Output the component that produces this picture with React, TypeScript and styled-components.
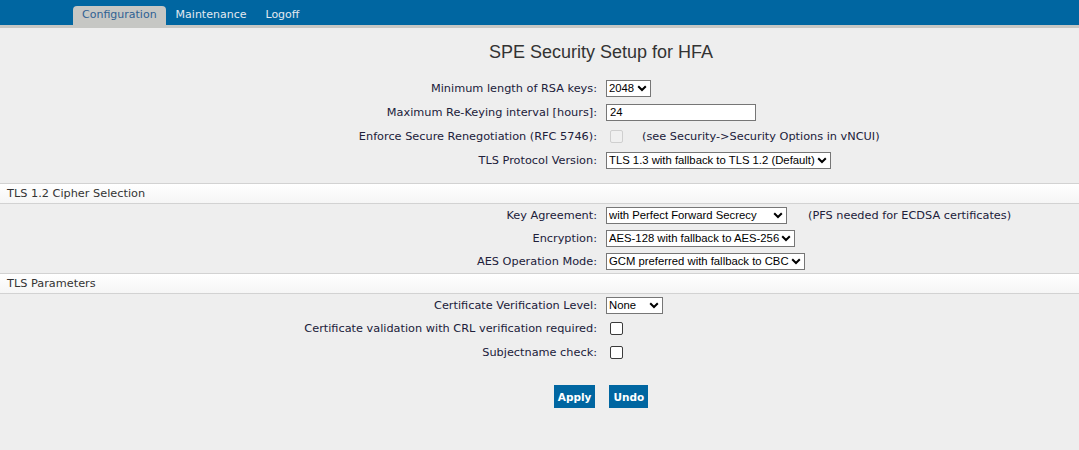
import React from "react";
import styled, { createGlobalStyle } from "styled-components";

const GlobalStyle = createGlobalStyle`
  html, body { margin: 0; padding: 0; background: #eeeeee; }
  body { font-family: "DejaVu Sans", Verdana, sans-serif; font-size: 11.3px; color: #20203a; }
`;

const Header = styled.div`
  height: 25px;
  background: #0066a1;
  display: flex;
  align-items: flex-end;
  padding-left: 73px;
  gap: 1px;
`;

const Tab = styled.a<{ $active?: boolean }>`
  height: 19px;
  line-height: 18px;
  padding: 0 9px;
  font-family: "DejaVu Sans", Verdana, sans-serif;
  font-size: 11px;
  text-decoration: none;
  border-radius: 4px 4px 0 0;
  background: ${(p) => (p.$active ? "#c6c7c4" : "transparent")};
  color: ${(p) => (p.$active ? "#2f6193" : "#e3e9f0")};
  cursor: pointer;
`;

const Strip = styled.div`
  height: 3px;
  background: #c6c7c4;
`;

const Title = styled.h1`
  margin: 13px 0 13px;
  padding-left: 123px;
  text-align: center;
  font-family: "Liberation Sans", Arial, sans-serif;
  font-weight: normal;
  font-size: 18px;
  line-height: 22px;
  color: #333333;
`;

const Row = styled.div<{ $h: number }>`
  display: grid;
  grid-template-columns: 601px 1fr;
  align-items: center;
  height: ${(p) => p.$h}px;
`;

const Label = styled.div`
  text-align: right;
  padding-right: 4px;
  white-space: nowrap;
`;

const Field = styled.div<{ $gap?: number }>`
  display: flex;
  align-items: center;
  padding-left: 5px;
  gap: ${(p) => p.$gap ?? 0}px;
  white-space: nowrap;
`;

const SectionHeader = styled.div<{ $mt: number }>`
  margin-top: ${(p) => p.$mt}px;
  height: 19px;
  line-height: 19px;
  border-top: 1px solid #d2d2d2;
  border-bottom: 1px solid #d2d2d2;
  background: linear-gradient(#ffffff, #f5f5f5);
  padding-left: 7px;
  color: #333333;
`;

const SelectWrap = styled.span<{ $w: number }>`
  position: relative;
  display: inline-block;
  width: ${(p) => p.$w}px;
  height: 17px;
`;

const Select = styled.select`
  appearance: none;
  -webkit-appearance: none;
  box-sizing: border-box;
  width: 100%;
  height: 100%;
  margin: 0;
  padding: 0 14px 0 2px;
  border: 1px solid #767676;
  border-radius: 0;
  background: #ffffff;
  color: #000000;
  font-family: "Liberation Sans", Arial, sans-serif;
  font-size: 11.3px;
  line-height: 15px;
  outline: none;
`;

const Chevron = styled.svg`
  position: absolute;
  right: 4px;
  top: 5px;
  width: 10px;
  height: 7px;
  pointer-events: none;
`;

const TextInput = styled.input`
  box-sizing: border-box;
  width: 150px;
  height: 17px;
  margin: 0;
  padding: 0 3px;
  border: 1px solid #767676;
  background: #ffffff;
  color: #000;
  font-family: "Liberation Sans", Arial, sans-serif;
  font-size: 11.3px;
  outline: none;
`;

const Check = styled.input`
  appearance: none;
  -webkit-appearance: none;
  box-sizing: border-box;
  width: 13px;
  height: 13px;
  margin: 0 0 0 4px;
  border: 1px solid #3b3b3b;
  border-radius: 2px;
  background: #ffffff;
  &:disabled {
    border-color: #cfcfcf;
    background: #f0f0f0;
  }
`;

const Note = styled.span`
  color: #20203a;
`;

const Buttons = styled.div`
  margin-top: 20px;
  padding-left: 123px;
  display: flex;
  justify-content: center;
  gap: 14px;
`;

const Button = styled.button`
  height: 23px;
  padding: 0 4px;
  border: none;
  background: #0066a1;
  color: #ffffff;
  font-family: "DejaVu Sans", Verdana, sans-serif;
  font-weight: bold;
  font-size: 10.5px;
  cursor: pointer;
`;

function Dropdown({ w, value, options }: { w: number; value: string; options?: string[] }) {
  const opts = options ?? [value];
  return (
    <SelectWrap $w={w}>
      <Select defaultValue={value}>
        {opts.map((o) => (
          <option key={o}>{o}</option>
        ))}
      </Select>
      <Chevron viewBox="0 0 10 7">
        <path d="M1.2 1.2 L5 5 L8.8 1.2" fill="none" stroke="#000" strokeWidth="2" />
      </Chevron>
    </SelectWrap>
  );
}

export default function App() {
  return (
    <>
      <GlobalStyle />
      <Header>
        <Tab $active>Configuration</Tab>
        <Tab>Maintenance</Tab>
        <Tab>Logoff</Tab>
      </Header>
      <Strip />
      <Title>SPE Security Setup for HFA</Title>

      <Row $h={24}>
        <Label>Minimum length of RSA keys:</Label>
        <Field>
          <Dropdown w={45} value="2048" options={["1024", "2048", "4096"]} />
        </Field>
      </Row>
      <Row $h={24}>
        <Label>Maximum Re-Keying interval [hours]:</Label>
        <Field>
          <TextInput defaultValue="24" />
        </Field>
      </Row>
      <Row $h={24}>
        <Label>Enforce Secure Renegotiation (RFC 5746):</Label>
        <Field $gap={19}>
          <Check type="checkbox" disabled />
          <Note>(see Security-&gt;Security Options in vNCUI)</Note>
        </Field>
      </Row>
      <Row $h={24}>
        <Label>TLS Protocol Version:</Label>
        <Field>
          <Dropdown w={225} value="TLS 1.3 with fallback to TLS 1.2 (Default)" />
        </Field>
      </Row>

      <SectionHeader $mt={11}>TLS 1.2 Cipher Selection</SectionHeader>
      <Row $h={23}>
        <Label>Key Agreement:</Label>
        <Field $gap={21}>
          <Dropdown w={181} value="with Perfect Forward Secrecy" />
          <Note>(PFS needed for ECDSA certificates)</Note>
        </Field>
      </Row>
      <Row $h={23}>
        <Label>Encryption:</Label>
        <Field>
          <Dropdown w={189} value="AES-128 with fallback to AES-256" />
        </Field>
      </Row>
      <Row $h={23}>
        <Label>AES Operation Mode:</Label>
        <Field>
          <Dropdown w={199} value="GCM preferred with fallback to CBC" />
        </Field>
      </Row>

      <SectionHeader $mt={0}>TLS Parameters</SectionHeader>
      <Row $h={23}>
        <Label>Certificate Verification Level:</Label>
        <Field>
          <Dropdown w={57} value="None" />
        </Field>
      </Row>
      <Row $h={23}>
        <Label>Certificate validation with CRL verification required:</Label>
        <Field>
          <Check type="checkbox" />
        </Field>
      </Row>
      <Row $h={25}>
        <Label>Subjectname check:</Label>
        <Field>
          <Check type="checkbox" />
        </Field>
      </Row>

      <Buttons>
        <Button>Apply</Button>
        <Button>Undo</Button>
      </Buttons>
    </>
  );
}
